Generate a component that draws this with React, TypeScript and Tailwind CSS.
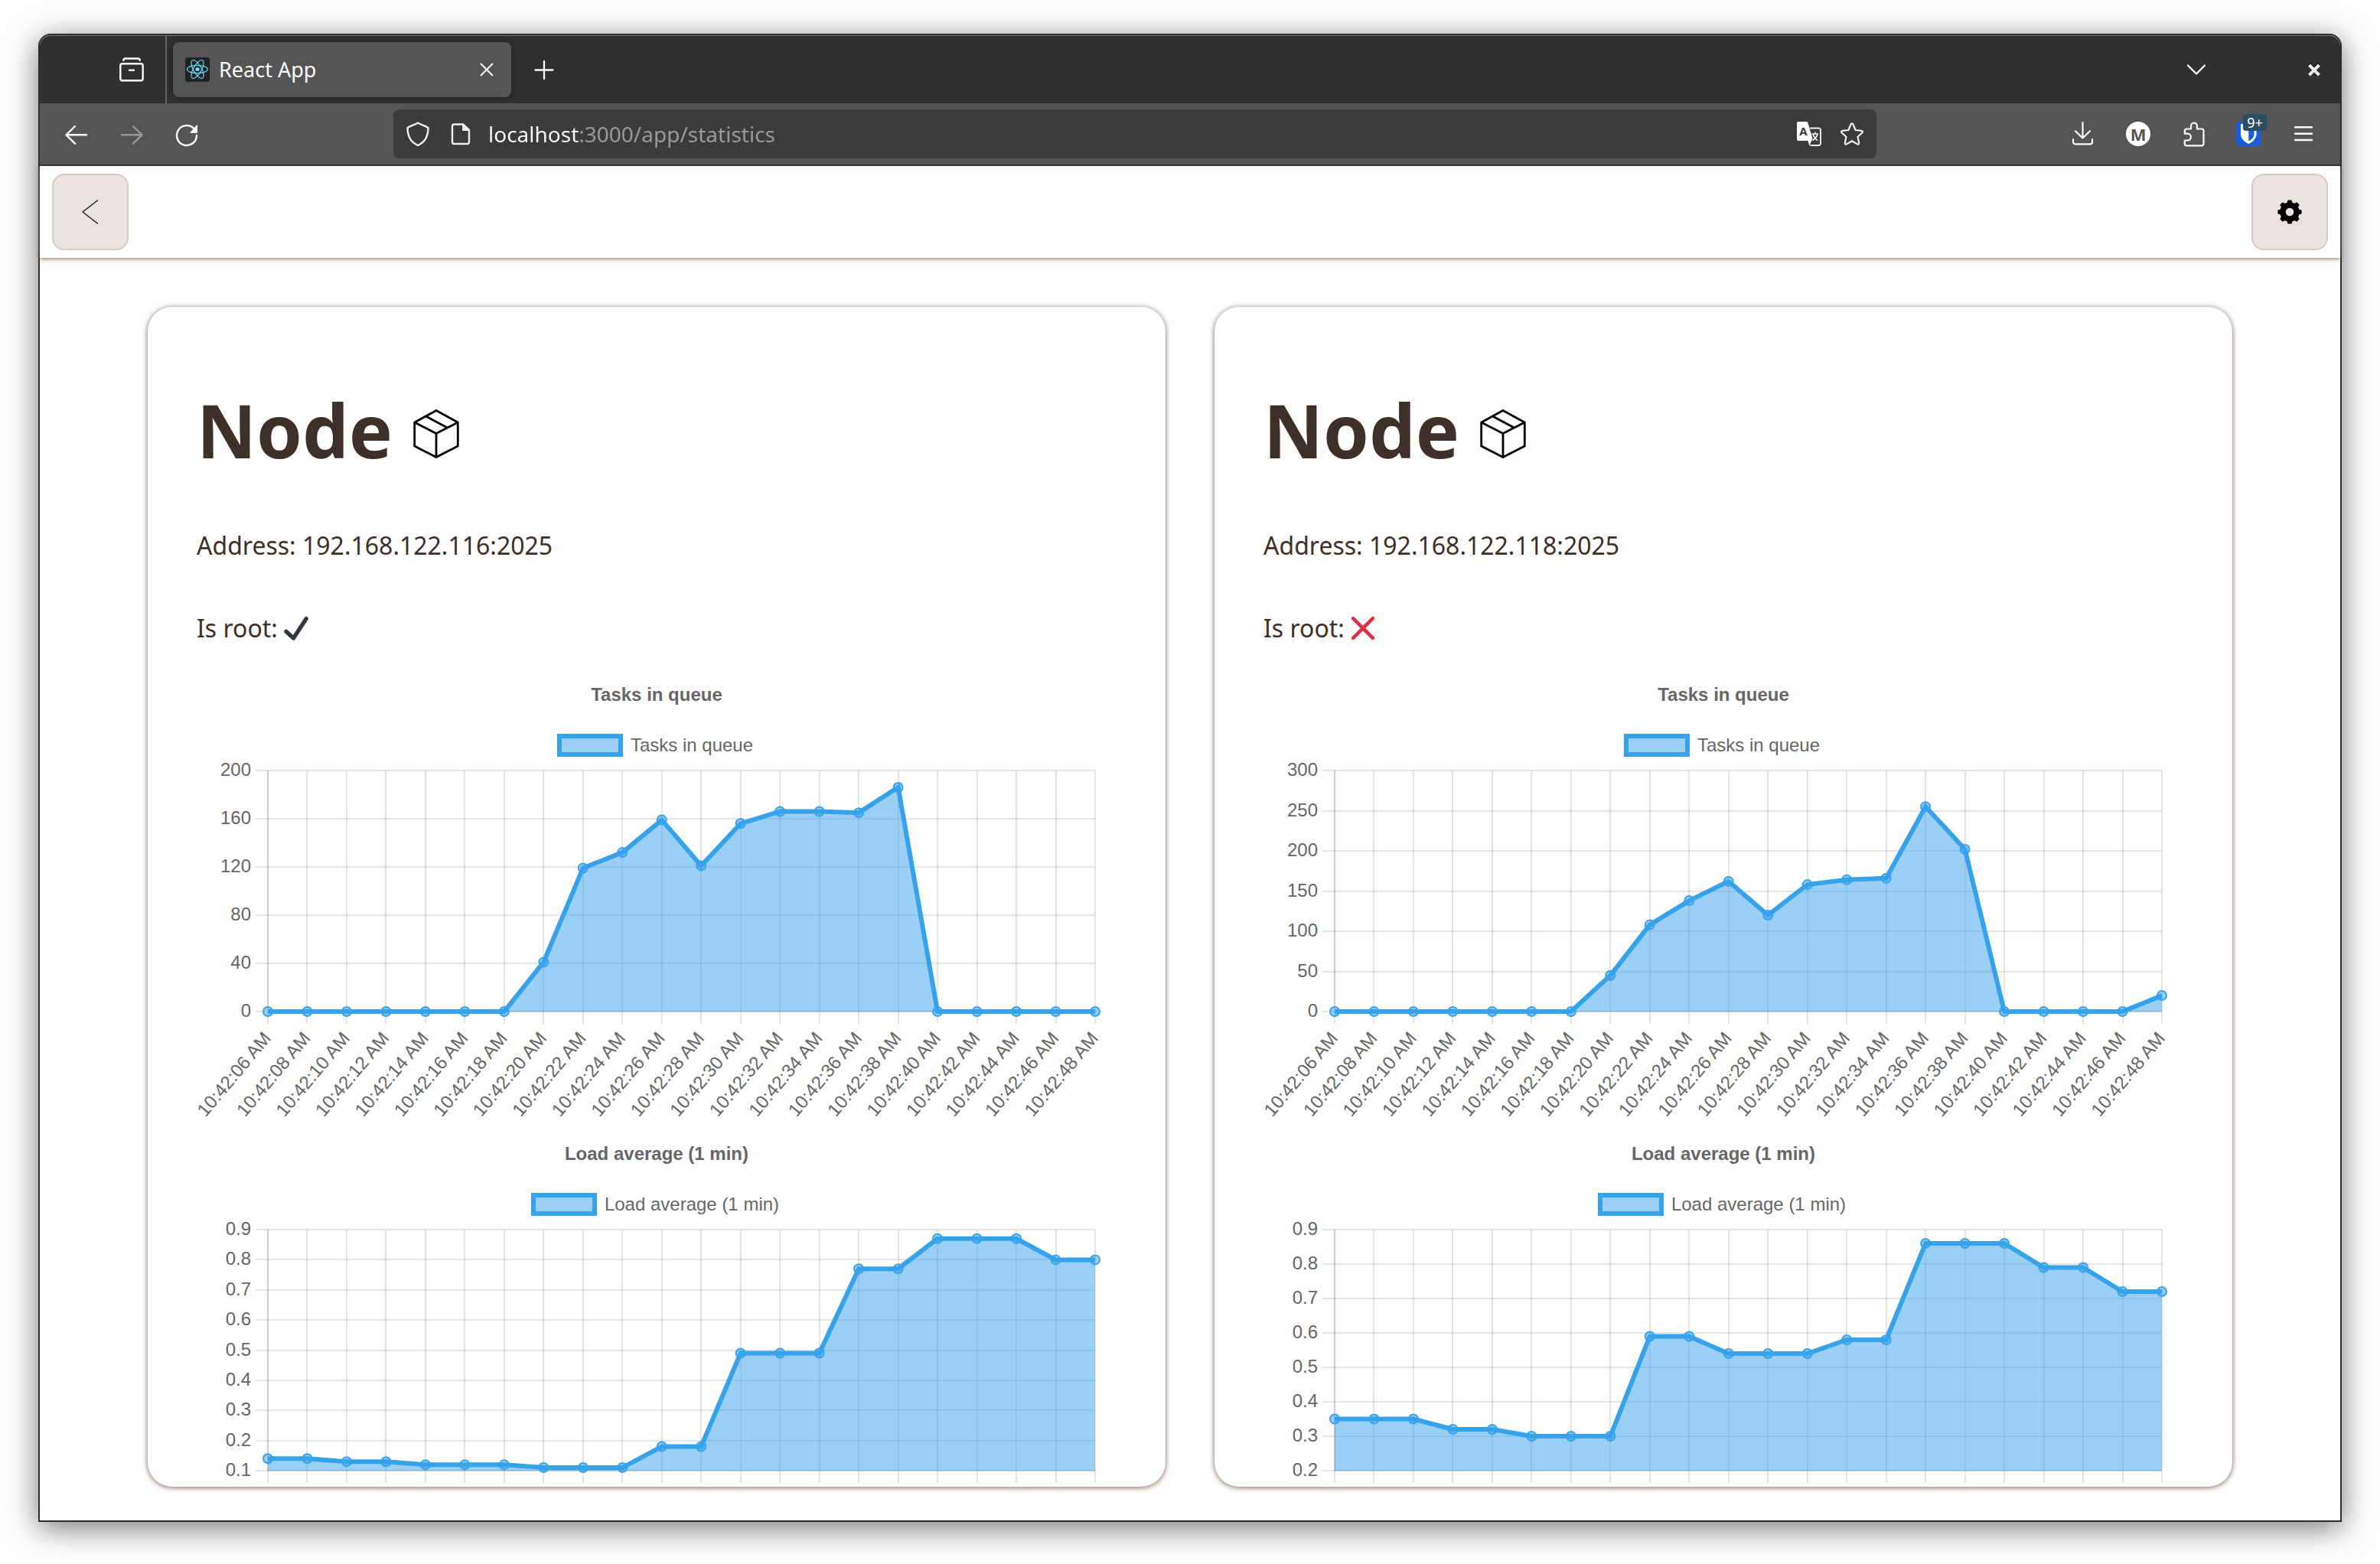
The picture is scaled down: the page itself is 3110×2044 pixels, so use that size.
import React from "react";

type IconProps = { children: React.ReactNode; className?: string };

function Icon({ children, className = "" }: IconProps) {
  return (
    <svg
      viewBox="0 0 32 32"
      fill="none"
      stroke="currentColor"
      strokeWidth="2.4"
      strokeLinecap="round"
      strokeLinejoin="round"
      aria-hidden="true"
      className={`size-8 shrink-0 overflow-visible ${className}`}
    >
      {children}
    </svg>
  );
}

function ReactLogo() {
  return (
    <svg viewBox="0 0 32 32" aria-hidden="true" className="size-8 shrink-0">
      <rect width="32" height="32" rx="3" fill="#222222" />
      <g fill="none" stroke="#61dafb" strokeWidth="1.2">
        <ellipse cx="16" cy="15.5" rx="13.5" ry="5.2" />
        <ellipse cx="16" cy="15.5" rx="13.5" ry="5.2" transform="rotate(60 16 15.5)" />
        <ellipse cx="16" cy="15.5" rx="13.5" ry="5.2" transform="rotate(120 16 15.5)" />
      </g>
      <circle cx="16" cy="15.5" r="2.6" fill="#61dafb" />
    </svg>
  );
}

function TabStrip() {
  return (
    <div className="flex h-[89px] shrink-0 items-stretch rounded-t-[14px] bg-[#303030] pr-[18px] text-[#fbfbfe] shadow-[inset_0_1px_0_#777777]">
      <div className="flex items-center border-r-2 border-[#626262] pr-7 pl-[104px]">
        <button type="button" aria-label="View recent browsing">
          <Icon>
            <path d="M5.3 3.8C5.3 2.2 6.2 1.5 7.8 1.5h16.4c1.6 0 2.5.7 2.5 2.3" />
            <rect x="1.3" y="8.3" width="29.4" height="22" rx="2.5" />
            <path d="M13 16.8h6" />
          </Icon>
        </button>
      </div>
      <div className="flex grow items-end pb-2">
        <div
          role="tab"
          aria-selected="true"
          className="ml-2 flex h-[72px] w-[442px] items-center gap-3 rounded-lg bg-[#555555] px-4 shadow-[0_0_8px_rgba(0,0,0,0.4)]"
        >
          <ReactLogo />
          <span className="grow text-[27px]">React App</span>
          <button type="button" aria-label="Close tab">
            <Icon>
              <path d="M8.5 8.5l15 15M23.5 8.5l-15 15" strokeWidth="2" />
            </Icon>
          </button>
        </div>
        <button type="button" aria-label="New tab" className="ml-[27px] flex h-[72px] items-center">
          <Icon>
            <path d="M16 5v23M4.5 16.5h23" strokeWidth="2.3" />
          </Icon>
        </button>
        <div className="ml-auto flex h-[72px] items-center gap-[122px]">
          <button type="button" aria-label="List all tabs">
            <Icon>
              <path d="M5 10.5l11 11 11-11" strokeWidth="2.3" />
            </Icon>
          </button>
          <button type="button" aria-label="Close window">
            <Icon>
              <path d="M9.5 8.5l13 13M22.5 8.5l-13 13" stroke="#111111" strokeWidth="4" strokeLinecap="butt" />
              <path d="M9.5 10l13 13M22.5 10l-13 13" strokeWidth="4" strokeLinecap="butt" stroke="#eeeeee" />
            </Icon>
          </button>
        </div>
      </div>
    </div>
  );
}

function NavBar() {
  return (
    <div className="flex h-[82px] shrink-0 items-center border-b-2 border-[#242424] bg-[#555555] px-8 text-[#fbfbfe]">
      <div className="flex gap-10">
        <button type="button" aria-label="Back">
          <Icon>
            <path d="M2.5 17.3H29M14 6L2.5 17.3 14 28.6" />
          </Icon>
        </button>
        <button type="button" aria-label="Forward" disabled className="text-[#989898]">
          <Icon>
            <path d="M29.5 17.3H3M18 6l11.5 11.3L18 28.6" />
          </Icon>
        </button>
        <button type="button" aria-label="Reload">
          <Icon>
            <path d="M29 18A13 13 0 1 1 25.2 8.8" />
            <path d="M29.5 5v9.300H21z" fill="currentColor" strokeWidth="1" />
          </Icon>
        </button>
      </div>
      <div className="flex-[254]" />
      <div className="flex h-16 flex-[1906] items-center rounded-lg bg-[#3b3b3b] px-4 text-[#eeeeee]">
        <button type="button" aria-label="Tracking protection">
          <Icon>
            <path d="M16 1.5c4 2.500 9 3.800 13.500 6.500C29.500 19 25 27 16 31 7 27 2.500 19 2.500 8 7 5.300 12 4 16 1.500z" />
          </Icon>
        </button>
        <button type="button" aria-label="Site information" className="ml-6">
          <Icon>
            <path d="M19 3.500H7.500a2.500 2.500 0 0 0-2.500 2.500v20.500A2.500 2.500 0 0 0 7.500 29h17a2.500 2.500 0 0 0 2.500-2.500V11z" />
            <path d="M19 3.500V11h8z" fill="currentColor" strokeWidth="1.8" />
          </Icon>
        </button>
        <input
          type="text"
          aria-label="Address"
          defaultValue="localhost:3000/app/statistics"
          className="ml-5 min-w-0 grow bg-[linear-gradient(90deg,#fbfbfe_120px,#9b9b9b_120px)] bg-clip-text text-[28px] text-transparent outline-none"
        />
        <button type="button" aria-label="Translate page">
          <svg viewBox="0 0 32 32" aria-hidden="true" className="size-8">
            <path d="M17 8.500h11.500a2.500 2.500 0 0 1 2.500 2.500v17.500a2.500 2.500 0 0 1-2.500 2.500H17.500" fill="none" stroke="#f4f4f6" strokeWidth="1.8" />
            <path d="M2 0h10.500a2 2 0 0 1 1.900 1.400L20.500 22l-4 9.500L14.300 25H2a2 2 0 0 1-2-2V2a2 2 0 0 1 2-2z" fill="#fbfbfe" />
            <text x="8.500" y="18" textAnchor="middle" fontFamily="Noto Sans" fontWeight="700" fontSize="15" fill="#3b3b3b">
              A
            </text>
            <path d="M19.500 16h8.500M23.800 13.500V16M27 16c-.8 4-3 6.500-6.500 8.500M21 16c1.200 4 3.200 6.800 6 8.500" fill="none" stroke="#f4f4f6" strokeWidth="1.6" />
          </svg>
        </button>
        <button type="button" aria-label="Bookmark this page" className="ml-6">
          <Icon>
            <path
              d="M14.600 3.400a1.500 1.500 0 0 1 2.800 0L20.600 11l8 .8a1.500 1.500 0 0 1 .9 2.600l-6 5.400 1.700 8a1.500 1.500 0 0 1-2.200 1.600L16 25.200l-7 4.200a1.500 1.500 0 0 1-2.200-1.600l1.700-8-6-5.400a1.500 1.500 0 0 1 .9-2.600l8-.8z"
              strokeWidth="2.2"
            />
          </Icon>
        </button>
      </div>
      <div className="flex-[254]" />
      <div className="flex gap-10">
        <button type="button" aria-label="Downloads">
          <Icon>
            <path d="M15.500 1v20M6 12.300l9.500 9.200 9.500-9.200M3 23v3.500A2.800 2.800 0 0 0 5.800 29.300h19.400a2.800 2.800 0 0 0 2.800-2.800V23" strokeWidth="2.2" />
          </Icon>
        </button>
        <button
          type="button"
          aria-label="Account"
          className="flex size-8 items-center justify-center rounded-full bg-white text-[22px] leading-8 font-bold text-[#555555]"
        >
          M
        </button>
        <button type="button" aria-label="Extensions">
          <Icon>
            <path
              d="M13 9.500V5.700a4 4 0 0 1 8 0V9.500H27a2.500 2.500 0 0 1 2.500 2.500V29a2.300 2.300 0 0 1-2.500 2.300H7A2.300 2.300 0 0 1 4.800 29V24.500H8.500a4.400 4.400 0 0 0 0-8.800H4.800V12A2.500 2.500 0 0 1 7.300 9.500z"
              strokeWidth="2.2"
            />
          </Icon>
        </button>
        <button type="button" aria-label="Password manager" className="relative">
          <svg viewBox="0 0 32 32" aria-hidden="true" className="size-8">
            <rect width="32" height="32" rx="5" fill="#175ddc" />
            <path d="M6 3h20.500v13c0 6-4.500 10.500-10.200 13C10.500 26.500 6 22 6 16z" fill="#ffffff" />
            <path d="M16.300 6h7.200v10.300c0 4-3 7-7.200 9.300z" fill="#175ddc" />
          </svg>
          <span className="absolute -top-2.5 left-[9px] flex h-[22px] w-[31px] items-center justify-center rounded-sm bg-[#2b4f61] text-lg text-white">
            9+
          </span>
        </button>
        <button type="button" aria-label="Open application menu">
          <Icon>
            <path d="M5 7.300h22M5 15.700h22M5 24h22" />
          </Icon>
        </button>
      </div>
    </div>
  );
}

const squareButton =
  "flex size-[100px] items-center justify-center rounded-2xl border-2 border-[#d7c9c3] bg-[#ebe3e1]";

function AppHeader() {
  const teeth = [0, 45, 90, 135, 180, 225, 270, 315];
  return (
    <header className="flex shrink-0 justify-between bg-white px-4 py-2.5 shadow-[0_1px_6px_#84695e]">
      <button type="button" aria-label="Go back" className={squareButton}>
        <Icon className="text-[#1c1c1c]">
          <path d="M26 .5L6 16l20 15.500" strokeWidth="1.500" strokeLinecap="butt" />
        </Icon>
      </button>
      <button type="button" aria-label="Settings" className={squareButton}>
        <Icon className="text-black">
          <circle cx="16" cy="16" r="9" strokeWidth="7.500" />
          {teeth.map((a) => (
            <path key={a} d="M13 5l1-4h4l1 4z" fill="currentColor" strokeWidth="1.200" transform={`rotate(${a} 16 16)`} />
          ))}
        </Icon>
      </button>
    </header>
  );
}

const times = Array.from({ length: 22 }, (_, i) => `10:42:${String(6 + i * 2).padStart(2, "0")} AM`);

type ChartProps = { title: string; ticks: string[]; data: number[] };

function AreaChart({ title, ticks, data }: ChartProps) {
  const left = 93;
  const right = 1174;
  const top = 1;
  const bottom = 316;
  const min = Number(ticks[0]);
  const max = Number(ticks[ticks.length - 1]);
  const px = (i: number) => left + ((right - left) * i) / (data.length - 1);
  const py = (v: number) => bottom - ((v - min) / (max - min)) * (bottom - top);
  const line = data.map((v, i) => `${px(i)},${py(v)}`).join(" ");

  return (
    <figure className="flex flex-col font-['Liberation_Sans',Arial,sans-serif] text-2xl text-[#666666]">
      <figcaption className="text-center leading-[69px] font-bold">{title}</figcaption>
      <div className="flex h-16 items-center justify-center gap-2.5 pr-1">
        <span className="h-[30px] w-[86px] border-[6px] border-[#36a2eb] bg-[#9ad0f5]" />
        <span>{title}</span>
      </div>
      <svg viewBox="0 0 1202 467" role="img" aria-label={title} className="block w-full overflow-visible">
        <g stroke="#000000" strokeOpacity="0.1" strokeWidth="2">
          {times.map((t, i) => (
            <line key={t} x1={Math.round(px(i))} x2={Math.round(px(i))} y1={top} y2={bottom + 16} />
          ))}
          {ticks.map((t) => {
            const y = Math.round(py(Number(t)));
            return <line key={t} x1={left - 16} x2={right} y1={y} y2={y} />;
          })}
          <line x1={left} x2={left} y1={top} y2={bottom} />
          <line x1={left} x2={right} y1={bottom} y2={bottom} />
        </g>
        <g fill="#666666" fontSize="24" textAnchor="end">
          {ticks.map((t) => (
            <text key={t} x={left - 22} y={py(Number(t)) + 7}>
              {t}
            </text>
          ))}
          {times.map((t, i) => (
            <text key={t} transform={`translate(${px(i)} 347) rotate(-50)`} y="7">
              {t}
            </text>
          ))}
        </g>
        <polygon points={`${left},${bottom} ${line} ${right},${bottom}`} fill="#36a2eb" fillOpacity="0.5" />
        <polyline points={line} fill="none" stroke="#36a2eb" strokeWidth="6" strokeLinejoin="miter" />
        <g fill="#36a2eb" fillOpacity="0.5" stroke="#36a2eb" strokeWidth="2">
          {data.map((v, i) => (
            <circle key={i} cx={px(i)} cy={py(v)} r="6" />
          ))}
        </g>
      </svg>
    </figure>
  );
}

function BoxIcon() {
  return (
    <svg
      viewBox="0 0 64 64"
      fill="none"
      stroke="#000000"
      strokeWidth="2.8"
      strokeLinejoin="round"
      aria-hidden="true"
      className="inline size-16 align-baseline"
    >
      <path d="M32 1.500L60.300 17v31L32 62.500 3.700 48V17zM3.700 17L32 31.500 60.300 17M32 31.500v31M18.500 9L46.500 24" />
    </svg>
  );
}

function RootMark({ isRoot }: { isRoot: boolean }) {
  return (
    <svg viewBox="0 0 36 36" role="img" aria-label={isRoot ? "yes" : "no"} className="size-8">
      {isRoot ? (
        <path
          fill="#31373d"
          d="M34.459 1.375c-1.391-.902-3.248-.506-4.149.884L13.500 28.170l-8.198-7.580c-1.217-1.125-3.114-1.051-4.239.166-1.125 1.216-1.051 3.114.166 4.239l10.764 9.952s.309.266.452.359c.504.328 1.070.484 1.630.484.982 0 1.946-.482 2.520-1.368L35.343 5.524c.902-1.390.506-3.248-.884-4.149z"
        />
      ) : (
        <path d="M3.500 3.500l29 29M32.500 3.500l-29 29" stroke="#dd2e44" strokeWidth="5" strokeLinecap="round" />
      )}
    </svg>
  );
}

type NodeInfo = { address: string; isRoot: boolean; charts: ChartProps[] };

function NodeCard({ address, isRoot, charts }: NodeInfo) {
  return (
    <section className="min-h-0 overflow-hidden rounded-4xl bg-white p-16 text-[#3e2f28] shadow-[0_1px_7px_#7d6055]">
      <h1 className="mt-8 text-8xl leading-[130px] font-bold">
        Node <BoxIcon />
      </h1>
      <p className="mt-16 text-[32px] leading-[44px]">Address: {address}</p>
      <p className="mt-16 mb-[30px] flex items-center gap-2 text-[32px] leading-[44px]">
        Is root: <RootMark isRoot={isRoot} />
      </p>
      {charts.map((c) => (
        <AreaChart key={c.title} {...c} />
      ))}
    </section>
  );
}

const nodes: NodeInfo[] = [
  {
    address: "192.168.122.116:2025",
    isRoot: true,
    charts: [
      {
        title: "Tasks in queue",
        ticks: ["0", "40", "80", "120", "160", "200"],
        data: [0, 0, 0, 0, 0, 0, 0, 41, 119, 132, 159, 121, 156, 166, 166, 165, 186, 0, 0, 0, 0, 0],
      },
      {
        title: "Load average (1 min)",
        ticks: ["0.1", "0.2", "0.3", "0.4", "0.5", "0.6", "0.7", "0.8", "0.9"],
        data: [
          0.14, 0.14, 0.13, 0.13, 0.12, 0.12, 0.12, 0.11, 0.11, 0.11, 0.18, 0.18, 0.49, 0.49, 0.49, 0.77, 0.77, 0.87,
          0.87, 0.87, 0.8, 0.8,
        ],
      },
    ],
  },
  {
    address: "192.168.122.118:2025",
    isRoot: false,
    charts: [
      {
        title: "Tasks in queue",
        ticks: ["0", "50", "100", "150", "200", "250", "300"],
        data: [0, 0, 0, 0, 0, 0, 0, 45, 108, 138, 162, 120, 158, 164, 166, 255, 202, 0, 0, 0, 0, 20],
      },
      {
        title: "Load average (1 min)",
        ticks: ["0.2", "0.3", "0.4", "0.5", "0.6", "0.7", "0.8", "0.9"],
        data: [
          0.35, 0.35, 0.35, 0.32, 0.32, 0.3, 0.3, 0.3, 0.59, 0.59, 0.54, 0.54, 0.54, 0.58, 0.58, 0.86, 0.86, 0.86, 0.79,
          0.79, 0.72, 0.72,
        ],
      },
    ],
  },
];

export default function App() {
  return (
    <div className="flex h-screen flex-col bg-white px-[50px] pt-11 pb-[55px] font-['Noto_Sans',sans-serif]">
      <div className="flex min-h-0 grow flex-col rounded-t-2xl border-2 border-[#2c2d2e] bg-white shadow-[0_8px_40px_rgba(0,0,0,0.55)]">
        <TabStrip />
        <NavBar />
        <AppHeader />
        <main className="grid min-h-0 grow grid-cols-2 grid-rows-[minmax(0,1fr)] gap-16 px-[141px] pt-16 pb-11">
          {nodes.map((n) => (
            <NodeCard key={n.address} {...n} />
          ))}
        </main>
      </div>
    </div>
  );
}
